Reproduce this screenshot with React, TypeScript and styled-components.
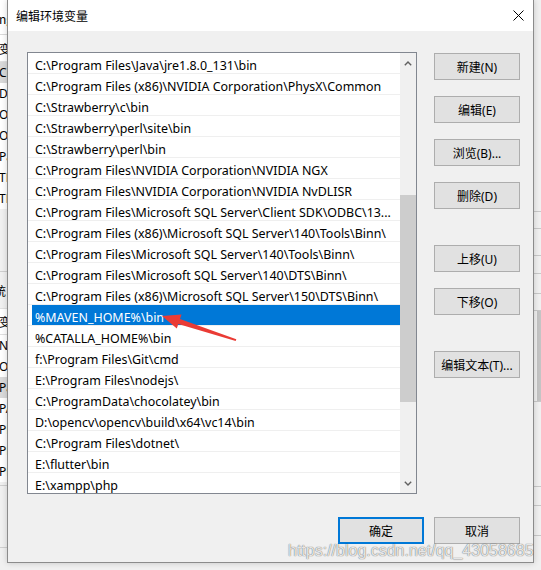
import styled, { createGlobalStyle } from 'styled-components';

const GlobalStyle = createGlobalStyle`
  html, body {
    margin: 0;
    padding: 0;
  }
  body {
    background: #f0f0f0;
    font-family: "Segoe UI", "Noto Sans", "Noto Sans CJK SC", sans-serif;
    font-size: 12px;
    color: #000;
  }
`;

const paths = [
  'C:\\Program Files\\Java\\jre1.8.0_131\\bin',
  'C:\\Program Files (x86)\\NVIDIA Corporation\\PhysX\\Common',
  'C:\\Strawberry\\c\\bin',
  'C:\\Strawberry\\perl\\site\\bin',
  'C:\\Strawberry\\perl\\bin',
  'C:\\Program Files\\NVIDIA Corporation\\NVIDIA NGX',
  'C:\\Program Files\\NVIDIA Corporation\\NVIDIA NvDLISR',
  'C:\\Program Files\\Microsoft SQL Server\\Client SDK\\ODBC\\13...',
  'C:\\Program Files (x86)\\Microsoft SQL Server\\140\\Tools\\Binn\\',
  'C:\\Program Files\\Microsoft SQL Server\\140\\Tools\\Binn\\',
  'C:\\Program Files\\Microsoft SQL Server\\140\\DTS\\Binn\\',
  'C:\\Program Files (x86)\\Microsoft SQL Server\\150\\DTS\\Binn\\',
  '%MAVEN_HOME%\\bin',
  '%CATALLA_HOME%\\bin',
  'f:\\Program Files\\Git\\cmd',
  'E:\\Program Files\\nodejs\\',
  'C:\\ProgramData\\chocolatey\\bin',
  'D:\\opencv\\opencv\\build\\x64\\vc14\\bin',
  'C:\\Program Files\\dotnet\\',
  'E:\\flutter\\bin',
  'E:\\xampp\\php',
];
const SELECTED = 12;

const userVars = ['Ch', 'Da', 'On', 'On', 'Pa', 'TE', 'TM'];
const sysVars = ['NU', 'OS', 'Pa', 'PA', 'PR', 'PR', 'PR'];

// scroll state of the path list
const scroll = { top: 125, size: 207 };

const Desktop = styled.div`
  position: relative;
  width: 541px;
  height: 570px;
  overflow: hidden;
  display: flex;
  justify-content: space-between;
  background: #f0f0f0;
`;

/* ---------- window behind, left edge ---------- */
const BackWindow = styled.div`
  width: 7px;
  display: flex;
  flex-direction: column;
  background: #f0f0f0;
  overflow: hidden;
`;

const BackTop = styled.div`
  height: 35px;
  background: #fff;
  border-bottom: 1px solid #dadada;
  display: flex;
  align-items: center;
  padding-top: 2px;
  box-sizing: border-box;
  white-space: nowrap;
`;

const BackHeader = styled.div<{ $h: number; $bg?: string }>`
  height: ${(p) => p.$h}px;
  background: ${(p) => p.$bg ?? '#fff'};
  border-bottom: 1px solid #e0e0e0;
  display: flex;
  align-items: center;
  white-space: nowrap;
`;

const BackRow = styled.div<{ $hi?: boolean }>`
  height: 21px;
  line-height: 21px;
  background: ${(p) => (p.$hi ? '#d9d9d9' : '#fff')};
  white-space: nowrap;
  overflow: hidden;
  text-indent: -1px;
`;

const BackGap = styled.div<{ $h: number; $line?: boolean }>`
  height: ${(p) => p.$h}px;
  border-bottom: ${(p) => (p.$line ? '1px solid #cfcfcf' : 'none')};
`;

const Label = styled.span<{ $shift?: number }>`
  margin-left: ${(p) => p.$shift ?? 0}px;
  font-family: "Noto Sans CJK SC", sans-serif;
`;

/* ---------- window behind, right edge ---------- */
const SideWindow = styled.div`
  width: 8px;
  display: flex;
  flex-direction: column;
  background: #f0f0f0;
  overflow: hidden;
`;

const SideLine = styled.div<{ $h: number }>`
  height: ${(p) => p.$h}px;
  border-bottom: 1px solid #c8c8c8;
  display: flex;
  justify-content: flex-end;
`;

const SideThumb = styled.div`
  width: 4px;
  background: #c4c4c4;
`;

/* ---------- the dialog ---------- */
const Dialog = styled.div`
  position: absolute;
  left: 7px;
  top: 0;
  width: 527px;
  height: 563px;
  box-sizing: border-box;
  border: 1px solid #8b8b8b;
  border-top: none;
  background: #f0f0f0;
  display: flex;
  flex-direction: column;
  box-shadow: 0 0 6px rgba(0, 0, 0, 0.18);
`;

const TitleBar = styled.div`
  height: 31px;
  flex: none;
  background: #fff;
  display: flex;
  align-items: center;
  justify-content: space-between;
  padding-left: 8px;
`;

const Title = styled.span`
  font-family: "Noto Sans CJK SC", sans-serif;
  font-size: 12px;
`;

const CloseButton = styled.div`
  width: 30px;
  height: 31px;
  display: flex;
  align-items: center;
  justify-content: center;
`;

const Body = styled.div`
  flex: 1;
  display: flex;
  flex-direction: column;
  padding: 21px 13px 18px 19px;
`;

const Main = styled.div`
  display: flex;
  gap: 17px;
`;

const PathList = styled.div`
  width: 390px;
  height: 442px;
  box-sizing: border-box;
  border: 1px solid #828790;
  background: #fff;
  display: flex;
  overflow: hidden;
`;

const Rows = styled.div`
  flex: 1;
  display: flex;
  flex-direction: column;
  overflow: hidden;
`;

const Row = styled.div`
  height: 21px;
  flex: none;
  box-sizing: border-box;
  border-bottom: 1px solid #efefef;
`;

const Cell = styled.div<{ $selected?: boolean }>`
  height: 20px;
  line-height: 25px;
  margin-left: 4px;
  padding-left: 3px;
  font-size: 12.45px;
  white-space: nowrap;
  overflow: hidden;
  background: ${(p) => (p.$selected ? '#0078d7' : 'transparent')};
  color: ${(p) => (p.$selected ? '#fff' : '#000')};
`;

const ScrollBar = styled.div`
  width: 16px;
  flex: none;
  background: #f0f0f0;
  display: flex;
  flex-direction: column;
`;

const ScrollArrow = styled.div`
  height: 20px;
  flex: none;
  display: flex;
  align-items: center;
  justify-content: center;
`;

const Track = styled.div`
  flex: 1;
`;

const Thumb = styled.div<{ $top: number; $size: number }>`
  margin-top: ${(p) => p.$top}px;
  height: ${(p) => p.$size}px;
  background: #cdcdcd;
`;

const Actions = styled.div`
  width: 86px;
  padding-top: 1px;
  display: flex;
  flex-direction: column;
  gap: 36px;
`;

const ButtonGroup = styled.div`
  display: flex;
  flex-direction: column;
  gap: 16px;
`;

const Button = styled.div<{ $primary?: boolean }>`
  width: 86px;
  height: 27px;
  box-sizing: border-box;
  border: ${(p) => (p.$primary ? '2px solid #0078d7' : '1px solid #adadad')};
  background: #e1e1e1;
  display: flex;
  align-items: center;
  justify-content: center;
  font-family: "Segoe UI", "Noto Sans", "Noto Sans CJK SC", sans-serif;
  font-size: 12px;
  white-space: nowrap;
`;

const Footer = styled.div`
  margin-top: 23px;
  display: flex;
  justify-content: flex-end;
  gap: 10px;
`;

/* ---------- overlays ---------- */
const Annotation = styled.svg`
  position: absolute;
  left: 0;
  top: 0;
  pointer-events: none;
`;

const Watermark = styled.div`
  position: absolute;
  left: 288px;
  top: 543px;
  font-family: "Liberation Sans", Arial, sans-serif;
  font-size: 16px;
  line-height: 16px;
  color: rgba(255, 255, 255, 0.85);
  text-shadow: 0 0 1px rgba(0, 0, 0, 0.55), 0 0 1px rgba(0, 0, 0, 0.3);
  white-space: nowrap;
  pointer-events: none;
`;

const Chevron = ({ down }: { down?: boolean }) => (
  <svg width="8" height="5" viewBox="0 0 8 5">
    <path
      d={down ? 'M0.8 0.8 L4 4 L7.2 0.8' : 'M0.8 4.2 L4 1 L7.2 4.2'}
      fill="none"
      stroke="#606060"
      strokeWidth="1.4"
    />
  </svg>
);

export default function App() {
  return (
    <>
      <GlobalStyle />
      <Desktop>
        <BackWindow>
          <BackTop>
            <Label $shift={-1}>ng</Label>
          </BackTop>
          <BackHeader $h={26}>
            <Label $shift={-1}>变</Label>
          </BackHeader>
          {userVars.map((v, i) => (
            <BackRow key={i} $hi={i === 0}>{v}</BackRow>
          ))}
          <BackGap $h={62} $line />
          <BackHeader $h={36} $bg="#f0f0f0">
            <Label $shift={-6}>统</Label>
          </BackHeader>
          <BackHeader $h={25}>
            <Label $shift={-1}>变</Label>
          </BackHeader>
          {sysVars.map((v, i) => (
            <BackRow key={i} $hi={i === 2}>{v}</BackRow>
          ))}
          <BackGap $h={3} $line />
          <BackGap $h={61} $line />
        </BackWindow>

        <SideWindow>
          <SideLine $h={211} />
          <SideLine $h={16} />
          <SideLine $h={26} />
          <SideLine $h={17} />
          <SideLine $h={19} />
          <SideLine $h={16} />
          <SideLine $h={90}>
            <SideThumb />
          </SideLine>
          <SideLine $h={84} />
          <SideLine $h={18} />
          <SideLine $h={29} />
        </SideWindow>

        <Dialog>
          <TitleBar>
            <Title>编辑环境变量</Title>
            <CloseButton>
              <svg width="11" height="11" viewBox="0 0 11 11">
                <path d="M0.5 0.5 L10.5 10.5 M10.5 0.5 L0.5 10.5" stroke="#000" strokeWidth="1" />
              </svg>
            </CloseButton>
          </TitleBar>
          <Body>
            <Main>
              <PathList>
                <Rows>
                  {paths.map((p, i) => (
                    <Row key={p}>
                      <Cell $selected={i === SELECTED}>{p}</Cell>
                    </Row>
                  ))}
                </Rows>
                <ScrollBar>
                  <ScrollArrow>
                    <Chevron />
                  </ScrollArrow>
                  <Track>
                    <Thumb $top={scroll.top - 3} $size={scroll.size} />
                  </Track>
                  <ScrollArrow>
                    <Chevron down />
                  </ScrollArrow>
                </ScrollBar>
              </PathList>
              <Actions>
                <ButtonGroup>
                  <Button>新建(N)</Button>
                  <Button>编辑(E)</Button>
                  <Button>浏览(B)...</Button>
                  <Button>删除(D)</Button>
                </ButtonGroup>
                <ButtonGroup>
                  <Button>上移(U)</Button>
                  <Button>下移(O)</Button>
                </ButtonGroup>
                <ButtonGroup>
                  <Button>编辑文本(T)...</Button>
                </ButtonGroup>
              </Actions>
            </Main>
            <Footer>
              <Button $primary>确定</Button>
              <Button>取消</Button>
            </Footer>
          </Body>
        </Dialog>

        {/* red pointer drawn over the selected entry */}
        <Annotation width="541" height="570" viewBox="0 0 541 570">
          <polygon
            points="162,316 181.5,314.6 180,319.1 236.3,339.2 235.7,340.9 178.3,323.9 176.8,328.4"
            fill="#ea3b35"
          />
        </Annotation>
        <Watermark>https://blog.csdn.net/qq_43058685</Watermark>
      </Desktop>
    </>
  );
}
